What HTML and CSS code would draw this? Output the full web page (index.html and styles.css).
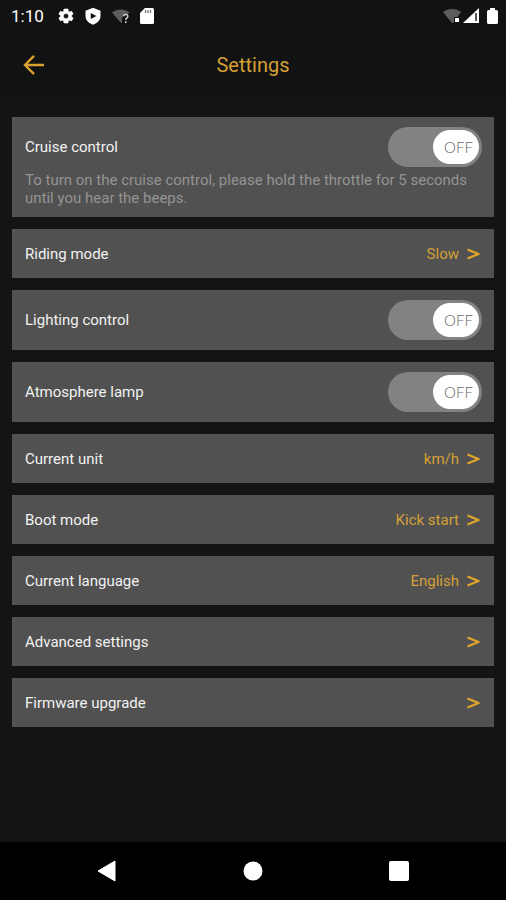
FILE: index.html
```html
<!DOCTYPE html>
<html lang="en">
<head>
<meta charset="utf-8">
<meta name="viewport" content="width=device-width, initial-scale=1">
<title>Settings</title>
<link rel="stylesheet" href="styles.css">
</head>
<body>
<div class="status">
  <div class="status-left">
    <time class="clock">1:10</time>
    <svg width="18" height="18" viewBox="0 0 24 24" fill="#fff" aria-hidden="true"><path fill-rule="evenodd" d="M19.4 13a7.500 7.500 0 0 0 0-2l2.200-1.700-2.200-3.800-2.600 1a8 8 0 0 0-1.700-1L14.700 2.700H9.300L8.900 5.500a8 8 0 0 0-1.700 1l-2.600-1-2.200 3.800L4.600 11a7.500 7.500 0 0 0 0 2l-2.200 1.700 2.200 3.800 2.600-1a8 8 0 0 0 1.700 1l.4 2.800h5.400l.4-2.800a8 8 0 0 0 1.700-1l2.600 1 2.200-3.800zM12 8.500a3.500 3.500 0 1 1 0 7 3.500 3.500 0 0 1 0-7z" stroke="#fff" stroke-width=".8"/></svg>
    <svg width="18" height="18" viewBox="0 0 24 24" fill="#fff" aria-hidden="true"><path fill-rule="evenodd" d="M12 1 2 5v7c0 5.500 4.200 9.700 10 11.500 5.800-1.800 10-6 10-11.500V5zM9 8 16.500 12 9 16z"/></svg>
    <svg width="20" height="18" viewBox="0 0 20 18" aria-hidden="true"><path d="M1 5.500C6 1.500 14 1.500 18.500 5.500L16 8h-3l-2 3v5L9.500 15.500z" fill="#5c5c5c"/><path d="M12.500 9.300c.2-2.500 4.500-2.400 4.300.2-.1 1.400-2 1.600-2 3.400M14.800 14.300v1.700" fill="none" stroke="#ccc" stroke-width="1.600"/></svg>
    <svg width="14" height="18" viewBox="0 0 14 18" aria-hidden="true"><path d="M5 1h7.500Q14 1 14 2.500v13q0 1.500-1.500 1.500h-11Q0 17 0 15.500V6z" fill="#fff"/><path d="M5.500 3v3M8 3v3M10.500 3v3" stroke="#777" stroke-width="1.300"/></svg>
  </div>
  <div class="status-right">
    <svg width="20" height="18" viewBox="0 0 20 18" aria-hidden="true"><path d="M1 5C6 1 14 1 19 5l-3.500 5H12v5.500L10 16z" fill="#5c5c5c"/><path d="M13 11h4v4h-4z" fill="#fff"/></svg>
    <svg width="16" height="18" viewBox="0 0 16 18" aria-hidden="true"><path d="M16 1v15H0z" fill="#fff"/><path d="M13 6v8" stroke="#222" stroke-width="1.500"/></svg>
    <svg class="battery" width="11" height="18" viewBox="0 0 11 18" aria-hidden="true"><path d="M3 1h5v2h1.500Q11 3 11 4.500v11Q11 17 9.500 17h-8Q0 17 0 15.500v-11Q0 3 1.500 3H3z" fill="#fff"/></svg>
  </div>
</div>
<header class="bar">
  <button class="back" type="button" aria-label="Back"><svg width="22" height="22" viewBox="0 0 22 22" aria-hidden="true"><path d="M21 11H2.500M11 1.800 2 11l9 9.200" fill="none" stroke="#d9a030" stroke-width="2.400"/></svg></button>
  <h1 class="title">Settings</h1>
</header>
<main class="list">
  <section class="card">
    <div class="line">
      <label for="cruise">Cruise control</label>
      <span class="switch"><input id="cruise" type="checkbox" role="switch" aria-describedby="cruise-note"><span class="knob" aria-hidden="true">OFF</span></span>
    </div>
    <p class="note" id="cruise-note">To turn on the cruise control, please hold the throttle for 5 seconds until you hear the beeps.</p>
  </section>
  <button class="card row" type="button"><span>Riding mode</span><span class="value">Slow</span><svg class="chevron" viewBox="0 0 14 12" aria-hidden="true"><path d="M.5 1.500 11.500 6 .5 10.500"/></svg></button>
  <section class="card line">
    <label for="lighting">Lighting control</label>
    <span class="switch"><input id="lighting" type="checkbox" role="switch"><span class="knob" aria-hidden="true">OFF</span></span>
  </section>
  <section class="card line">
    <label for="lamp">Atmosphere lamp</label>
    <span class="switch"><input id="lamp" type="checkbox" role="switch"><span class="knob" aria-hidden="true">OFF</span></span>
  </section>
  <button class="card row" type="button"><span>Current unit</span><span class="value">km/h</span><svg class="chevron" viewBox="0 0 14 12" aria-hidden="true"><path d="M.5 1.500 11.500 6 .5 10.500"/></svg></button>
  <button class="card row" type="button"><span>Boot mode</span><span class="value">Kick start</span><svg class="chevron" viewBox="0 0 14 12" aria-hidden="true"><path d="M.5 1.500 11.500 6 .5 10.500"/></svg></button>
  <button class="card row" type="button"><span>Current language</span><span class="value">English</span><svg class="chevron" viewBox="0 0 14 12" aria-hidden="true"><path d="M.5 1.500 11.500 6 .5 10.500"/></svg></button>
  <button class="card row" type="button"><span>Advanced settings</span><span class="value"></span><svg class="chevron" viewBox="0 0 14 12" aria-hidden="true"><path d="M.5 1.500 11.500 6 .5 10.500"/></svg></button>
  <button class="card row" type="button"><span>Firmware upgrade</span><span class="value"></span><svg class="chevron" viewBox="0 0 14 12" aria-hidden="true"><path d="M.5 1.500 11.500 6 .5 10.500"/></svg></button>
</main>
<nav class="system" aria-label="System">
  <button type="button" aria-label="Back"><svg width="20" height="22" viewBox="0 0 20 22" aria-hidden="true"><path d="M18 1v20L1 11z" fill="#fff" stroke="#fff" stroke-linejoin="round"/></svg></button>
  <button type="button" aria-label="Home"><svg width="20" height="20" viewBox="0 0 20 20" aria-hidden="true"><circle cx="10" cy="10" r="9.500" fill="#fff"/></svg></button>
  <button type="button" aria-label="Recent apps"><svg width="20" height="20" viewBox="0 0 20 20" aria-hidden="true"><rect width="20" height="20" rx="2" fill="#fff"/></svg></button>
</nav>
</body>
</html>
```
FILE: styles.css
```css
* {
  box-sizing: border-box;
}

body {
  margin: 0;
  min-height: 100vh;
  display: flex;
  flex-direction: column;
  background: #141414;
  color: #f2f2f2;
  font: 15px/18px Roboto, "Liberation Sans", sans-serif;
}

button {
  border: 0;
  padding: 0;
  background: none;
  color: inherit;
  font: inherit;
  cursor: pointer;
}

svg {
  display: block;
  flex: none;
}

.status {
  display: flex;
  justify-content: space-between;
  padding: 7px 8px 7px 11px;
  background: #121212;
}

.status-left,
.status-right {
  display: flex;
  align-items: center;
}

.status-left {
  gap: 9px;
}

.status-right {
  gap: 1px;
}

.battery {
  margin-left: 7px;
}

.clock {
  margin-right: 4px;
  color: #fff;
  font-size: 17px;
}

.bar {
  display: grid;
  grid-template-columns: 44px 1fr 44px;
  align-items: center;
  padding: 0 12px;
  height: 65px;
  background: #121212;
}

.back {
  display: flex;
  justify-content: center;
  padding: 11px 0;
}

.title {
  margin: 0;
  color: #d4a035;
  font-size: 20px;
  line-height: 24px;
  font-weight: 400;
  text-align: center;
}

.list {
  flex: 1;
  display: flex;
  flex-direction: column;
  gap: 12px;
  padding: 20px 12px;
}

.card {
  padding: 10px 12px 10px 13px;
  background: #515151;
}

.line,
.row {
  display: flex;
  align-items: center;
}

.line {
  justify-content: space-between;
}

.row {
  min-height: 49px;
  padding-right: 13px;
  text-align: left;
}

.value {
  margin-left: auto;
  color: #d4a035;
}

.chevron {
  width: 14px;
  height: 12px;
  margin-left: 8px;
  fill: none;
  stroke: #e0a52c;
  stroke-width: 2.4;
  stroke-linejoin: round;
}

.note {
  margin: 4px 0 0;
  color: #949494;
}

.switch {
  display: grid;
  width: 94px;
  height: 40px;
}

.switch > * {
  grid-area: 1 / 1;
}

.switch input {
  appearance: none;
  margin: 0;
  border-radius: 20px;
  background: #828282;
  cursor: pointer;
}

.knob {
  justify-self: end;
  align-self: center;
  width: 46px;
  margin-right: 3px;
  padding-left: 5px;
  border-radius: 17px;
  background: #fff;
  color: #666;
  font: 300 15px/34px Lato, sans-serif;
  text-align: center;
  pointer-events: none;
}

.switch input:checked + .knob {
  justify-self: start;
  margin-left: 3px;
}

.system {
  display: flex;
  justify-content: space-between;
  padding: 0 82px;
  height: 58px;
  background: #000;
}

.system button {
  display: flex;
  align-items: center;
  justify-content: center;
  width: 50px;
}
```
